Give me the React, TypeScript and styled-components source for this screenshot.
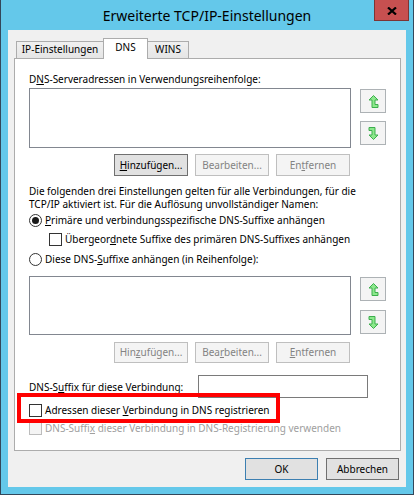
import React from "react";
import styled, { createGlobalStyle } from "styled-components";

const FONT = `"Noto Sans", "DejaVu Sans", sans-serif`;

const Global = createGlobalStyle`
  html, body { margin: 0; padding: 0; background: #ffffff; }
  body { font-family: ${FONT}; }
  *, *::before, *::after { box-sizing: border-box; }
`;

const Window = styled.div`
  width: 414px;
  height: 495px;
  background: #64c8ea;
  border: 1px solid #33475a;
  border-top: none;
  display: flex;
  flex-direction: column;
  font-family: ${FONT};
  font-size: 10px;
  color: #000;
`;

const TitleBar = styled.div`
  height: 30px;
  flex: none;
  display: grid;
  grid-template-columns: 1fr auto 1fr;
  align-items: start;
`;

const Title = styled.div`
  grid-column: 2;
  font-size: 14px;
  line-height: 31px;
  color: #000;
  white-space: nowrap;
`;

const CloseButton = styled.div`
  grid-column: 3;
  justify-self: end;
  margin-right: 4px;
  width: 35px;
  height: 21px;
  background: #c75050;
  border: 1px solid #7d3434;
  border-top: none;
  display: flex;
  align-items: center;
  justify-content: center;
  padding-top: 1px;
`;

const Body = styled.div`
  flex: 1;
  margin: 0 7px 7px 7px;
  background: #f0f0f0;
  padding: 8px 5px 7px 6px;
  display: flex;
  flex-direction: column;
`;

const TabStrip = styled.div`
  display: flex;
  align-items: flex-end;
  padding-left: 2px;
  height: 20px;
  flex: none;
`;

const Tab = styled.div<{ $w: number; $active?: boolean }>`
  width: ${(p) => p.$w}px;
  height: ${(p) => (p.$active ? 21 : 17)}px;
  margin-bottom: ${(p) => (p.$active ? -1 : 0)}px;
  & + & { margin-left: -1px; }
  position: relative;
  z-index: ${(p) => (p.$active ? 2 : 1)};
  border: 1px solid #acacac;
  border-bottom: none;
  background: ${(p) => (p.$active ? "#ffffff" : "linear-gradient(#f0f0f0, #e5e5e5)")};
  text-align: center;
  line-height: ${(p) => (p.$active ? 17 : 15)}px;
  white-space: nowrap;
  font-size: 10px;
`;

const Panel = styled.div`
  flex: 1;
  position: relative;
  border: 1px solid #acacac;
  background: #ffffff;
  padding: 14px 14px 0 14px;
  display: flex;
  flex-direction: column;
`;

const Label = styled.div<{ $disabled?: boolean }>`
  line-height: 12px;
  height: 12px;
  white-space: nowrap;
  color: ${(p) => (p.$disabled ? "#a0a0a0" : "#000")};
`;

const Key = styled.span`
  text-decoration: underline;
  text-underline-offset: 1px;
`;

const ListRow = styled.div<{ $mt: number; $h: number }>`
  margin-top: ${(p) => p.$mt}px;
  height: ${(p) => p.$h}px;
  display: flex;
  gap: 9px;
`;

const ListBox = styled.div`
  width: 322px;
  height: 100%;
  border: 1px solid #828790;
  background: #ffffff;
`;

const SideButtons = styled.div<{ $gap: number }>`
  display: flex;
  flex-direction: column;
  padding-top: 1px;
  gap: ${(p) => p.$gap}px;
`;

const ArrowButton = styled.div`
  width: 26px;
  height: 24px;
  border: 1px solid #adb2b5;
  background: #f4f4f4;
  display: flex;
  align-items: center;
  justify-content: center;
`;

const ButtonRow = styled.div<{ $mt: number }>`
  margin-top: ${(p) => p.$mt}px;
  width: 322px;
  display: flex;
  justify-content: flex-end;
  gap: 7px;
  padding-right: 1px;
`;

const Button = styled.div<{ $w: number; $h: number; $variant: "normal" | "disabled" | "default" }>`
  width: ${(p) => p.$w}px;
  height: ${(p) => p.$h}px;
  display: flex;
  align-items: center;
  justify-content: center;
  white-space: nowrap;
  font-size: 10px;
  border: 1px solid
    ${(p) => (p.$variant === "disabled" ? "#bfbfbf" : p.$variant === "default" ? "#3c7fb1" : "#707070")};
  background: ${(p) => (p.$variant === "disabled" ? "#f4f4f4" : "#e1e1e1")};
  color: ${(p) => (p.$variant === "disabled" ? "#838383" : "#000")};
  padding-bottom: 1px;
`;

const Paragraph = styled.div`
  margin-top: 9px;
  line-height: 13px;
  white-space: nowrap;
`;

const OptionRow = styled.div<{ $mt: number; $indent?: number; $disabled?: boolean }>`
  position: relative;
  margin-top: ${(p) => p.$mt}px;
  margin-left: ${(p) => p.$indent ?? 0}px;
  height: 16px;
  display: flex;
  align-items: center;
  gap: 3px;
  white-space: nowrap;
  color: ${(p) => (p.$disabled ? "#a0a0a0" : "#000")};
`;

const Radio = styled.span<{ $checked?: boolean }>`
  width: 13px;
  height: 13px;
  border-radius: 50%;
  border: 1px solid #333333;
  background: #ffffff;
  display: flex;
  align-items: center;
  justify-content: center;
  flex: none;
  &::after {
    content: "";
    display: ${(p) => (p.$checked ? "block" : "none")};
    width: 7px;
    height: 7px;
    border-radius: 50%;
    background: #1a1a1a;
  }
`;

const CheckBox = styled.span<{ $disabled?: boolean }>`
  width: 13px;
  height: 13px;
  border: 1px solid ${(p) => (p.$disabled ? "#bcbcbc" : "#333333")};
  background: ${(p) => (p.$disabled ? "#f4f4f4" : "#ffffff")};
  flex: none;
`;

const SuffixRow = styled.div`
  margin-top: 12px;
  display: grid;
  grid-template-columns: 169px 170px;
  align-items: center;
`;

const TextBox = styled.div`
  height: 23px;
  border: 1px solid #7a7a7a;
  background: #ffffff;
`;

const Highlight = styled.div`
  position: absolute;
  left: -12px;
  top: -9px;
  width: 263px;
  height: 30px;
  border: 4px solid #ff0000;
  z-index: 3;
  pointer-events: none;
`;

const DialogButtons = styled.div`
  margin-top: 7px;
  display: flex;
  justify-content: flex-end;
  gap: 8px;
  padding-right: 2px;
  flex: none;
`;

const UpArrow = () => (
  <svg width="11" height="13" viewBox="0 0 11 13">
    <polygon
      points="5.5,0.5 10,5 7,5 7,9.5 10,9.5 10,12.5 4,12.5 4,5 1,5"
      fill="#8ce88c"
      stroke="#3cae4c"
      strokeWidth="1"
      strokeLinejoin="miter"
    />
  </svg>
);

const DownArrow = () => (
  <svg width="11" height="13" viewBox="0 0 11 13">
    <polygon
      points="1,0.5 7,0.5 7,8 10,8 5.5,12.5 1,8 4,8 4,3.5 1,3.5"
      fill="#8ce88c"
      stroke="#3cae4c"
      strokeWidth="1"
      strokeLinejoin="miter"
    />
  </svg>
);

const CloseGlyph = () => (
  <svg width="10" height="8" viewBox="0 0 10 8">
    <path d="M1 0.5 L9 7.5 M9 0.5 L1 7.5" stroke="#000" strokeWidth="2.2" />
  </svg>
);

export default function App() {
  return (
    <>
      <Global />
      <Window>
        <TitleBar>
          <Title>Erweiterte TCP/IP-Einstellungen</Title>
          <CloseButton>
            <CloseGlyph />
          </CloseButton>
        </TitleBar>
        <Body>
          <TabStrip>
            <Tab $w={88}>IP-Einstellungen</Tab>
            <Tab $w={45} $active>
              DNS
            </Tab>
            <Tab $w={42}>WINS</Tab>
          </TabStrip>
          <Panel>
            <Label>
              D<Key>N</Key>S-Serveradressen in Verwendungsreihenfolge:
            </Label>
            <ListRow $mt={3} $h={60}>
              <ListBox />
              <SideButtons $gap={8}>
                <ArrowButton>
                  <UpArrow />
                </ArrowButton>
                <ArrowButton>
                  <DownArrow />
                </ArrowButton>
              </SideButtons>
            </ListRow>
            <ButtonRow $mt={6}>
              <Button $w={74} $h={22} $variant="normal">
                <Key>H</Key>inzufügen...
              </Button>
              <Button $w={74} $h={22} $variant="disabled">
                Bearbeiten...
              </Button>
              <Button $w={74} $h={22} $variant="disabled">
                En<Key>t</Key>fernen
              </Button>
            </ButtonRow>
            <Paragraph>
              Die folgenden drei Einstellungen gelten für alle Verbindungen, für die
              <br />
              TCP/IP aktiviert ist. Für die Auflösung unvollständiger Namen:
            </Paragraph>
            <OptionRow $mt={1}>
              <Radio $checked />
              <span>
                <Key>P</Key>rimäre und verbindungsspezifische DNS-Suffixe anhängen
              </span>
            </OptionRow>
            <OptionRow $mt={3} $indent={20}>
              <CheckBox />
              <span>
                Übergeor<Key>d</Key>nete Suffixe des primären DNS-Suffixes anhängen
              </span>
            </OptionRow>
            <OptionRow $mt={4}>
              <Radio />
              <span>
                Diese DNS-<Key>S</Key>uffixe anhängen (in Reihenfolge):
              </span>
            </OptionRow>
            <ListRow $mt={9} $h={59}>
              <ListBox />
              <SideButtons $gap={9}>
                <ArrowButton>
                  <UpArrow />
                </ArrowButton>
                <ArrowButton>
                  <DownArrow />
                </ArrowButton>
              </SideButtons>
            </ListRow>
            <ButtonRow $mt={7}>
              <Button $w={74} $h={21} $variant="disabled">
                Hin<Key>z</Key>ufügen...
              </Button>
              <Button $w={74} $h={21} $variant="disabled">
                Bea<Key>r</Key>beiten...
              </Button>
              <Button $w={74} $h={21} $variant="disabled">
                <Key>E</Key>ntfernen
              </Button>
            </ButtonRow>
            <SuffixRow>
              <Label>
                DNS-S<Key>u</Key>ffix für diese Verbindung:
              </Label>
              <TextBox />
            </SuffixRow>
            <OptionRow $mt={4}>
              <Highlight />
              <CheckBox />
              <span>
                Adressen dieser <Key>V</Key>erbindung in DNS registrieren
              </span>
            </OptionRow>
            <OptionRow $mt={2} $disabled>
              <CheckBox $disabled />
              <span>
                DNS-Suffi<Key>x</Key> dieser Verbindung in DNS-Registrierung verwenden
              </span>
            </OptionRow>
          </Panel>
          <DialogButtons>
            <Button $w={73} $h={22} $variant="default">
              OK
            </Button>
            <Button $w={73} $h={22} $variant="normal">
              Abbrechen
            </Button>
          </DialogButtons>
        </Body>
      </Window>
    </>
  );
}
